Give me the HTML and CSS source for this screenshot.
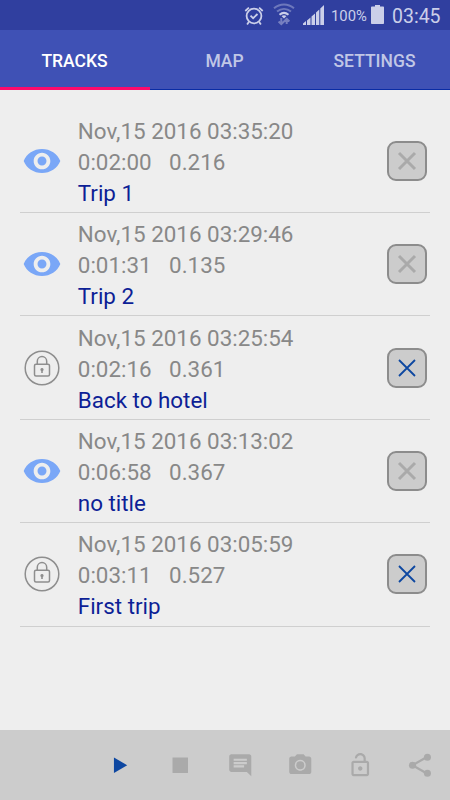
FILE: index.html
```html
<!DOCTYPE html>
<html lang="en">
<head>
  <meta charset="UTF-8" />
  <meta name="viewport" content="width=device-width, initial-scale=1.0" />
  <title>Tracks</title>
  <link rel="stylesheet" href="styles.css">
</head>
<body>
  <svg class="sprite" width="0" height="0">
    <symbol id="eye" viewBox="0 0 24 24"><path d="M12 4.8C7 4.8 2.730 7.700 1 12c1.730 4.300 6 7.200 11 7.200s9.270-2.900 11-7.200c-1.730-4.300-6-7.200-11-7.200zM12 17c-2.760 0-5-2.240-5-5s2.240-5 5-5 5 2.240 5 5-2.240 5-5 5zm0-7.700c-1.500 0-2.700 1.200-2.700 2.700s1.200 2.700 2.700 2.700 2.700-1.200 2.700-2.700-1.200-2.700-2.700-2.700z"/></symbol>
    <symbol id="lock" viewBox="0 0 36 36">
      <g fill="none" stroke="currentColor" stroke-width="1.500">
        <circle cx="18" cy="18" r="16.800"/>
        <rect x="10.500" y="14.300" width="15" height="11.700" rx="1.500"/>
        <path d="M13.300 14.300v-3a4.700 4.700 0 0 1 9.400 0v3"/>
      </g>
      <path d="M18 18a1.600 1.600 0 0 1 .8 3v2h-1.600v-2a1.600 1.600 0 0 1 .8-3z"/>
    </symbol>
  </svg>

  <header class="status-bar">
    <svg class="alarm" width="20" height="20" viewBox="0 0 20 20" fill="none" stroke="currentColor" stroke-width="1.8">
      <circle cx="10" cy="10" r="7.4"/>
      <path d="M6.500 9.700l2.600 2.500 4.400-4.200M1.300 5l3.600-3.300M18.700 5l-3.600-3.300M4.800 16l-1.700 2.500M15.200 16l1.700 2.500"/>
    </svg>
    <svg class="wifi" width="22" height="23" viewBox="0 0 22 23" fill="none" stroke="currentColor" stroke-width="2">
      <path opacity=".4" d="M1 5.200c6-5 14-5 20 0M4 8.500c4.300-3.500 9.700-3.500 14 0"/>
      <path d="M6.500 11.700c2.700-2.200 6.300-2.200 9 0"/>
      <path d="M8.500 13q2.500-1.500 5 0L11 15.500z" fill="currentColor" stroke="none"/>
      <path opacity=".45" stroke-width="2" d="M13.700 15v6M11 18.500l2.700-2.700 2.700 2.700M8.300 15v6M5.600 18.500l2.700 2.700 2.700-2.700"/>
    </svg>
    <svg class="signal" width="21" height="20" viewBox="0 0 21 20" fill="currentColor">
      <path d="M0 20v-1.500l3-2.500V20zM4 20v-4.500l3.500-3V20zM8.500 20v-8.500l3.500-3V20zM13 20V7.500l3.300-3V20zM17.300 20V3.500L21 0v20z"/>
    </svg>
    <span class="percent">100%</span>
    <svg class="battery" width="13" height="19" viewBox="0 0 13 19" fill="currentColor">
      <path d="M4 0h5v1.500h3.200q.8 0 .8.800v15.900q0 .800-.8.800H.800q-.8 0-.8-.800V2.300q0-.8.8-.8H4z"/>
    </svg>
    <span class="clock">03:45</span>
  </header>

  <nav class="tabs">
    <a class="tab active">TRACKS</a>
    <a class="tab">MAP</a>
    <a class="tab">SETTINGS</a>
  </nav>

  <main class="tracks" id="tracks"></main>

  <footer class="toolbar">
    <button class="play"><svg viewBox="0 0 24 24"><path d="M6.300 5v14l12-7z"/></svg></button>
    <button><svg viewBox="0 0 24 24"><path d="M5 5h14v14H5z"/></svg></button>
    <button><svg viewBox="0 0 24 24"><path d="M22 4c0-1.100-.89-2-2-2H4c-1.100 0-2 .9-2 2v12c0 1.100.9 2 2 2h14l4 4zM15.500 14H6v-2h9.500zM18 11H6V9h12zM18 8H6V6h12z"/></svg></button>
    <button><svg viewBox="0 0 24 24"><circle cx="12" cy="12" r="3.600"/><path d="M9 2L7.170 4H4c-1.100 0-2 .9-2 2v12c0 1.100.9 2 2 2h16c1.100 0 2-.9 2-2V6c0-1.100-.9-2-2-2h-3.170L15 2H9zm3 15c-2.760 0-5-2.240-5-5s2.240-5 5-5 5 2.240 5 5-2.240 5-5 5z"/></svg></button>
    <button><svg viewBox="0 0 24 24"><path d="M18 8h-1V6c0-2.760-2.240-5-5-5-2.280 0-4.270 1.540-4.840 3.750-.14.540.18 1.080.72 1.220.53.140 1.080-.18 1.220-.72C9.440 3.930 10.630 3 12 3c1.650 0 3 1.350 3 3v2H6c-1.100 0-2 .9-2 2v10c0 1.100.9 2 2 2h12c1.100 0 2-.9 2-2V10c0-1.100-.9-2-2-2zm0 12H6V10h12v10zm-6-3c1.100 0 2-.9 2-2s-.9-2-2-2-2 .9-2 2 .9 2 2 2z"/></svg></button>
    <button><svg viewBox="0 0 24 24"><path d="M5 12L18 4.500M5 12l13 7.500" fill="none" stroke="currentColor" stroke-width="2"/><circle cx="18.500" cy="4.800" r="3.200"/><circle cx="5" cy="12" r="3.200"/><circle cx="18.500" cy="19.200" r="3.200"/></svg></button>
  </footer>

  <script>
    const tracks = [
      { date: "Nov,15 2016 03:35:20", time: "0:02:00", distance: "0.216", title: "Trip 1", locked: false },
      { date: "Nov,15 2016 03:29:46", time: "0:01:31", distance: "0.135", title: "Trip 2", locked: false },
      { date: "Nov,15 2016 03:25:54", time: "0:02:16", distance: "0.361", title: "Back to hotel", locked: true },
      { date: "Nov,15 2016 03:13:02", time: "0:06:58", distance: "0.367", title: "no title", locked: false },
      { date: "Nov,15 2016 03:05:59", time: "0:03:11", distance: "0.527", title: "First trip", locked: true }
    ];

    const container = document.getElementById('tracks');
    tracks.forEach(track => {
      const icon = track.locked ? 'lock' : 'eye';
      const div = document.createElement('div');
      div.className = 'track';
      div.innerHTML = `
        <div class="state"><svg class="${icon}"><use href="#${icon}"/></svg></div>
        <div class="info">
          <div>${track.date}</div>
          <div class="numbers"><span>${track.time}</span><span>${track.distance}</span></div>
          <div class="title">${track.title}</div>
        </div>
        <button class="delete ${track.locked ? 'enabled' : ''}">
          <svg width="20" height="20" viewBox="0 0 20 20"><path d="M2 2l16 16M18 2L2 18"/></svg>
        </button>
      `;
      container.appendChild(div);
    });
  </script>
</body>
</html>
```
FILE: styles.css
```css
:root {
  --bg: #eeeeee;
  --primary: #3f51b5;
  --primary-dark: #303f9f;
  --accent: #ff0a6c;
  --status: #cbcfe9;
}
* {
  box-sizing: border-box;
}
body {
  margin: 0;
  height: 100vh;
  display: flex;
  flex-direction: column;
  font-family: Roboto, sans-serif;
  background: var(--bg);
  overflow: hidden;
}
button {
  padding: 0;
  border: none;
  background: none;
}
svg {
  display: block;
  flex: none;
}
.sprite {
  display: none;
}
.status-bar {
  height: 30px;
  flex: none;
  display: flex;
  align-items: center;
  justify-content: flex-end;
  padding-right: 10px;
  background: var(--primary-dark);
  color: var(--status);
}
.alarm {
  margin: 1px 9px 0 0;
}
.wifi {
  margin: -1px 8px 0 0;
}
.signal {
  margin-right: 7px;
}
.percent {
  width: 36px;
  font-size: 14.8px;
  margin: 2px 4px 0 0;
}
.battery {
  margin: -2px 8px 0 0;
}
.clock {
  width: 48px;
  font-size: 19.5px;
  margin-top: 2px;
}
.tabs {
  height: 60px;
  flex: none;
  display: flex;
  background: var(--primary);
  border-bottom: 1px solid #0a2ca5;
}
.tab {
  flex: 1;
  height: 60px;
  display: flex;
  align-items: center;
  justify-content: center;
  padding: 2px 1px 0 0;
  border-top: 3px solid transparent;
  border-bottom: 3px solid transparent;
  font-size: 17.5px;
  font-weight: 500;
  color: #c1c7e6;
}
.tab.active {
  color: #fff;
  border-bottom-color: var(--accent);
}
.tracks {
  flex: 1;
  padding: 19.6px 20px 0;
}
.track {
  height: 103.4px;
  display: flex;
  align-items: center;
  border-bottom: 1px solid #cfcfcf;
}
.state {
  width: 44px;
  margin-right: 13.8px;
  display: flex;
  justify-content: center;
  color: #8e8e8e;
  fill: currentColor;
}
.eye {
  width: 40px;
  height: 40px;
  color: #7aa7f7;
}
.lock {
  width: 36px;
  height: 36px;
}
.info {
  flex: 1;
  padding-top: 3px;
  font-size: 22.4px;
  line-height: 31px;
  color: #888;
}
.numbers {
  display: flex;
  gap: 17.5px;
}
.title {
  color: #0d1f96;
}
.delete {
  width: 40px;
  height: 40px;
  margin-right: 2.7px;
  display: flex;
  align-items: center;
  justify-content: center;
  border: 2px solid #8c8c8c;
  border-radius: 9px;
  background: #ccc;
}
.delete path {
  fill: none;
  stroke: #aaa;
  stroke-width: 3;
}
.delete.enabled path {
  stroke: #0d47a1;
  stroke-width: 1.8;
}
.toolbar {
  height: 70px;
  flex: none;
  display: flex;
  justify-content: flex-end;
  background: #ccc;
}
.toolbar button {
  width: 60px;
  display: flex;
  align-items: center;
  justify-content: center;
  color: #aaa;
}
.toolbar svg {
  width: 26.5px;
  height: 26.5px;
  fill: currentColor;
}
.toolbar .play {
  color: #0d47a1;
}
```
